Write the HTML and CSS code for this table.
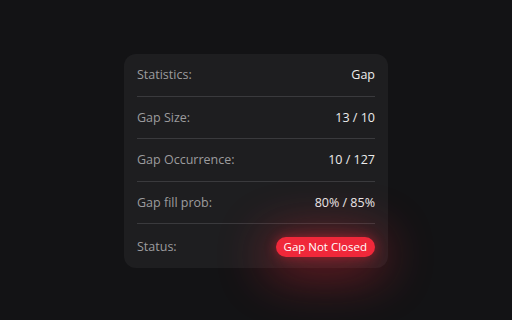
FILE: index.html
```html
<!DOCTYPE html>
<html lang="en">
<head>
    <meta charset="UTF-8">
    <meta name="viewport" content="width=device-width, initial-scale=1.0">
    <title>Gap Statistics</title>
    <link rel="stylesheet" href="styles.css">
</head>
<body>

    <div class="stats-card">
        <div class="row">
            <span class="label">Statistics:</span>
            <span class="value">Gap</span>
        </div>
        <div class="row">
            <span class="label">Gap Size:</span>
            <span class="value">13 / 10</span>
        </div>
        <div class="row">
            <span class="label">Gap Occurrence:</span>
            <span class="value">10 / 127</span>
        </div>
        <div class="row">
            <span class="label">Gap fill prob:</span>
            <span class="value">80% / 85%</span>
        </div>
        <div class="row">
            <span class="label">Status:</span>
            <span class="badge">Gap Not Closed</span>
        </div>
    </div>

</body>
</html>
```

FILE: styles.css
```css
/* Global Styles */
body {
    font-family: "Open Sans", "Noto Sans", sans-serif;
    display: flex;
    justify-content: center;
    align-items: flex-start;
    height: 100vh;
    margin: 0;
    padding-top: 54px;
    box-sizing: border-box;
    background-color: #131315;
}

/* Stats Card */
.stats-card {
    width: 264px;
    padding: 0 13px;
    box-sizing: border-box;
    background-color: #1e1e20;
    border-radius: 12px;
}

.row {
    display: flex;
    justify-content: space-between;
    align-items: center;
    height: 41.5px;
    border-bottom: 1px solid #3a3a3d;
    font-size: 12.5px;
}

.row:last-child {
    border-bottom: none;
    height: 44px;
}

.label {
    color: #9c9c9e;
}

.value {
    color: #ececec;
    font-weight: 500;
}

/* Status Badge */
.badge {
    background-color: #f0283a;
    color: #fff;
    font-size: 11.5px;
    font-weight: 500;
    padding: 2px 8px;
    line-height: 16px;
    border-radius: 10px;
    margin-top: 1px;
    box-shadow: 0 0 12px rgba(240, 40, 58, 0.45),
                0 8px 50px 10px rgba(240, 40, 58, 0.45);
}
```
